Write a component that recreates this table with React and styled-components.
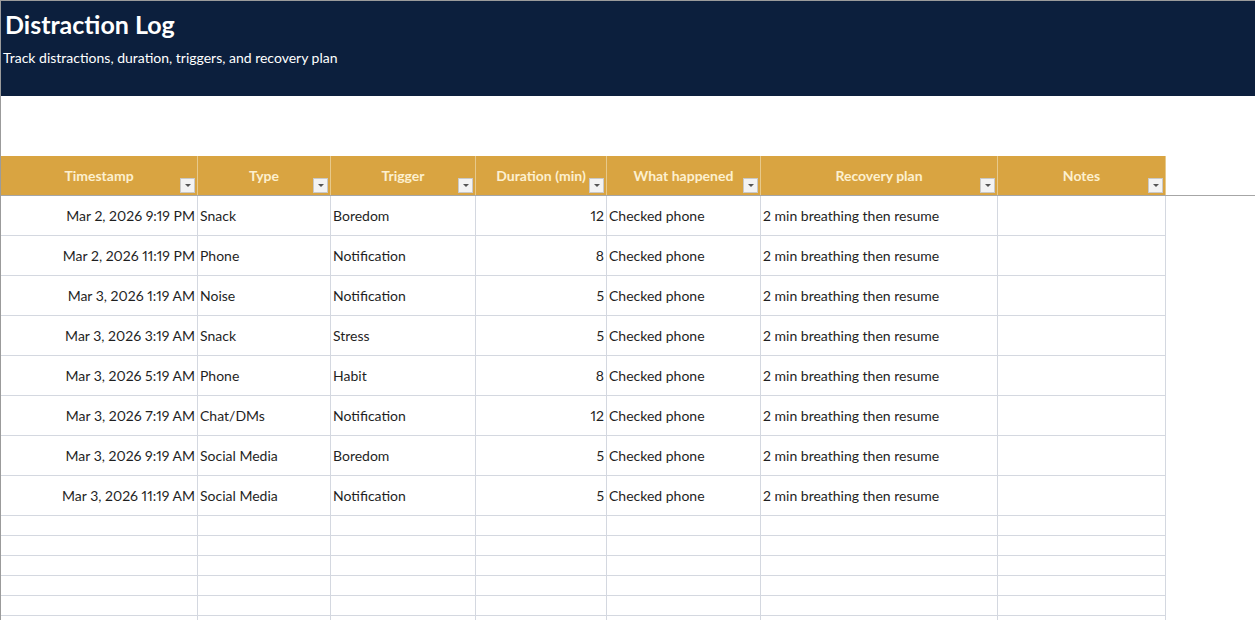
import React from 'react';
import styled, { createGlobalStyle } from 'styled-components';

const GlobalStyle = createGlobalStyle`
  html, body {
    margin: 0;
    padding: 0;
    background: #fff;
  }
  body {
    font-family: Lato, "Liberation Sans", Arial, sans-serif;
    overflow: hidden;
  }
`;

const columns = [
  { key: 'ts', label: 'Timestamp', width: 197, align: 'right' },
  { key: 'type', label: 'Type', width: 133 },
  { key: 'trigger', label: 'Trigger', width: 145 },
  { key: 'duration', label: 'Duration (min)', width: 131, align: 'right' },
  { key: 'what', label: 'What happened', width: 154 },
  { key: 'plan', label: 'Recovery plan', width: 237 },
  { key: 'notes', label: 'Notes', width: 168 },
];

const gridTemplate = columns.map((c) => `${c.width}px`).join(' ');

const rows = [
  { ts: 'Mar 2, 2026 9:19 PM', type: 'Snack', trigger: 'Boredom', duration: 12 },
  { ts: 'Mar 2, 2026 11:19 PM', type: 'Phone', trigger: 'Notification', duration: 8 },
  { ts: 'Mar 3, 2026 1:19 AM', type: 'Noise', trigger: 'Notification', duration: 5 },
  { ts: 'Mar 3, 2026 3:19 AM', type: 'Snack', trigger: 'Stress', duration: 5 },
  { ts: 'Mar 3, 2026 5:19 AM', type: 'Phone', trigger: 'Habit', duration: 8 },
  { ts: 'Mar 3, 2026 7:19 AM', type: 'Chat/DMs', trigger: 'Notification', duration: 12 },
  { ts: 'Mar 3, 2026 9:19 AM', type: 'Social Media', trigger: 'Boredom', duration: 5 },
  { ts: 'Mar 3, 2026 11:19 AM', type: 'Social Media', trigger: 'Notification', duration: 5 },
].map((r) => ({ ...r, what: 'Checked phone', plan: '2 min breathing then resume', notes: '' }));

const Sheet = styled.div`
  height: 620px;
  border-left: 1px solid #9b9b9b;
  border-top: 1px solid #9b9b9b;
  box-sizing: border-box;
`;

const Banner = styled.header`
  height: 95px;
  background: #0c1f3d;
  color: #fff;
  padding: 8px 0 0 4px;
  box-sizing: border-box;
`;

const Title = styled.h1`
  margin: 0;
  font-size: 25px;
  font-weight: 700;
  line-height: 30px;
`;

const Subtitle = styled.p`
  margin: 10px 0 0 -2px;
  font-size: 14px;
  line-height: 18px;
`;

const Spacer = styled.div`
  height: 60px;
`;

const HeaderBand = styled.div`
  border-bottom: 1px solid #a6a6a6;
`;

const Row = styled.div`
  display: grid;
  grid-template-columns: ${gridTemplate};
  height: ${(p) => p.$height}px;
`;

const HeadCell = styled.div`
  position: relative;
  background: #d9a441;
  border-right: 1px solid #e7c98b;
  color: #fdf0cf;
  font-weight: 700;
  font-size: 14px;
  display: flex;
  align-items: center;
  justify-content: center;
  box-sizing: border-box;
`;

const FilterButton = styled.span`
  position: absolute;
  right: 2px;
  bottom: 2px;
  width: 15px;
  height: 15px;
  background: #f3f3f3;
  border: 1px solid #c9c9c9;
  box-sizing: border-box;
  display: flex;
  align-items: center;
  justify-content: center;
`;

const Caret = styled.span`
  width: 0;
  height: 0;
  border-left: 3px solid transparent;
  border-right: 3px solid transparent;
  border-top: 3px solid #555;
`;

const Cell = styled.div`
  border-right: 1px solid #d4d8e0;
  border-bottom: 1px solid #d4d8e0;
  font-size: 14px;
  font-variant-numeric: proportional-nums;
  color: #1f1f1f;
  display: flex;
  align-items: center;
  justify-content: ${(p) => (p.$align === 'right' ? 'flex-end' : 'flex-start')};
  padding: 0 2px;
  box-sizing: border-box;
  white-space: nowrap;
  overflow: hidden;
`;

export default function App() {
  const blanks = Array.from({ length: 6 });
  return (
    <>
      <GlobalStyle />
      <Sheet>
        <Banner>
          <Title>Distraction Log</Title>
          <Subtitle>Track distractions, duration, triggers, and recovery plan</Subtitle>
        </Banner>
        <Spacer />
        <HeaderBand>
          <Row $height={39}>
            {columns.map((c) => (
              <HeadCell key={c.key}>
                {c.label}
                <FilterButton>
                  <Caret />
                </FilterButton>
              </HeadCell>
            ))}
          </Row>
        </HeaderBand>
        {rows.map((r, i) => (
          <Row key={i} $height={40}>
            {columns.map((c) => (
              <Cell key={c.key} $align={c.align}>
                {r[c.key]}
              </Cell>
            ))}
          </Row>
        ))}
        {blanks.map((_, i) => (
          <Row key={`b${i}`} $height={20}>
            {columns.map((c) => (
              <Cell key={c.key} />
            ))}
          </Row>
        ))}
      </Sheet>
    </>
  );
}
